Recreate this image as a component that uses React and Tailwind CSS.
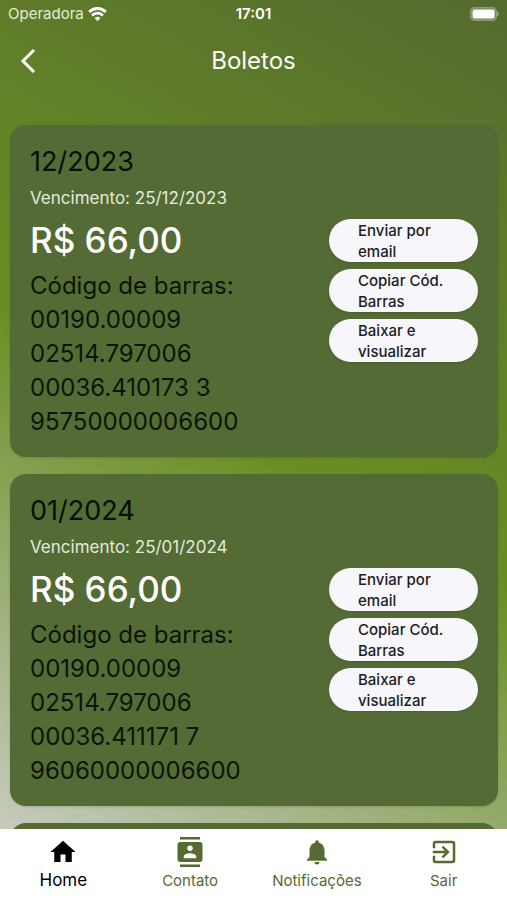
import React, { useState } from 'react';
import { MdHome, MdContacts, MdNotifications, MdExitToApp } from 'react-icons/md';

const boletos = [
    { id: 1, mes: '12/2023', vencimento: '25/12/2023', valor: 'R$ 66,00', codigo: '00190.00009 02514.797006 00036.410173 3 95750000006600' },
    { id: 2, mes: '01/2024', vencimento: '25/01/2024', valor: 'R$ 66,00', codigo: '00190.00009 02514.797006 00036.411171 7 96060000006600' },
];

const acoes = ['Enviar por email', 'Copiar Cód. Barras', 'Baixar e visualizar'];

const abas = [
    { label: 'Home', Icon: MdHome },
    { label: 'Contato', Icon: MdContacts },
    { label: 'Notificações', Icon: MdNotifications },
    { label: 'Sair', Icon: MdExitToApp },
];

const StatusBar = () => (
    <div className="grid grid-cols-3 items-center h-7 px-2 text-[#e4ecd6]">
        <div className="flex items-center gap-1">
            <span className="text-[15px]">Operadora</span>
            <svg width="19" height="15" viewBox="0 0 19 15" fill="none" stroke="#fff" strokeWidth="2.8">
                <path d="M1.2 4.9a11.8 11.8 0 0 1 16.6 0" />
                <path d="M4.1 8.4a7.6 7.6 0 0 1 10.8 0" />
                <path d="M9.5 14 6.6 11.2a4.1 4.1 0 0 1 5.8 0z" fill="#fff" stroke="none" />
            </svg>
        </div>
        <span className="text-center text-[15px] font-semibold text-white">17:01</span>
        <svg className="justify-self-end" width="30" height="14" viewBox="0 0 30 14">
            <rect x="1.7" y="0.7" width="25.8" height="12.6" rx="3.8" fill="#fff" fillOpacity="0.2" stroke="#fff" strokeOpacity="0.3" strokeWidth="1.2" />
            <rect x="3.6" y="2.4" width="22" height="9.2" rx="2" fill="#fff" />
            <path d="M28.4 4.8c1.8.7 1.8 3.7 0 4.4z" fill="#fff" fillOpacity="0.5" />
        </svg>
    </div>
);

const BoletoCard = ({ boleto }) => (
    <article className="shrink-0 rounded-2xl bg-[#556b35] px-5 pt-5 pb-[18px] shadow-sm">
        <h2 className="text-[27px] leading-[34px] text-[#070f03]">{boleto.mes}</h2>
        <p className="text-[17px] leading-[38px] text-[#e3ead8]">Vencimento: {boleto.vencimento}</p>
        <div className="flex gap-4">
            <div className="flex-1 min-w-0">
                <p className="text-[35px] leading-[46px] font-medium text-white">{boleto.valor}</p>
                <p className="mt-1.5 text-2xl leading-[34px] text-[#0b1505]">Código de barras: {boleto.codigo}</p>
            </div>
            <div className="flex flex-col gap-[7px] pt-0.5 w-[149px]">
                {acoes.map((acao) => (
                    <button
                        key={acao}
                        className="h-[43px] rounded-full bg-[#f7f6fb] px-[29px] text-left text-[15px] leading-[21px] font-medium text-[#1c1c1e] shadow-sm"
                    >
                        {acao}
                    </button>
                ))}
            </div>
        </div>
    </article>
);

const App = () => {
    const [aba, setAba] = useState('Home');

    return (
        <div className="flex flex-col h-screen font-['Inter',sans-serif] bg-[linear-gradient(209deg,#556b2f_0%,#6b8e23_50%,#d3d3d3_100%)]">
            <StatusBar />

            <header className="grid grid-cols-[48px_1fr_48px] items-center h-[66px] px-1">
                <button className="flex justify-center" aria-label="Voltar">
                    <svg width="16" height="26" viewBox="0 0 16 26" fill="none" stroke="#fff" strokeWidth="3">
                        <path d="M14 2 3 13l11 11" />
                    </svg>
                </button>
                <h1 className="text-center text-2xl text-[#fbfdf6]">Boletos</h1>
            </header>

            <main className="flex-1 min-h-0 overflow-y-auto [scrollbar-width:none] flex flex-col gap-[17px] pl-[10px] pr-[9px] pt-[31px] pb-4">
                {boletos.map((boleto) => (
                    <BoletoCard key={boleto.id} boleto={boleto} />
                ))}
                <div className="shrink-0 h-80 rounded-2xl bg-[#556b35] shadow-sm" aria-hidden="true" />
            </main>

            <nav className="grid grid-cols-4 h-[71px] bg-white">
                {abas.map(({ label, Icon }) => (
                    <button
                        key={label}
                        onClick={() => setAba(label)}
                        className={
                            aba === label
                                ? 'flex flex-col items-center pt-2 text-[17px] leading-[26px] text-black'
                                : 'flex flex-col items-center pt-2 text-[15px] leading-[28px] text-[#556b2f]'
                        }
                    >
                        <Icon className="size-[30px] shrink-0" />
                        <span>{label}</span>
                    </button>
                ))}
            </nav>
        </div>
    );
};

export default App;
